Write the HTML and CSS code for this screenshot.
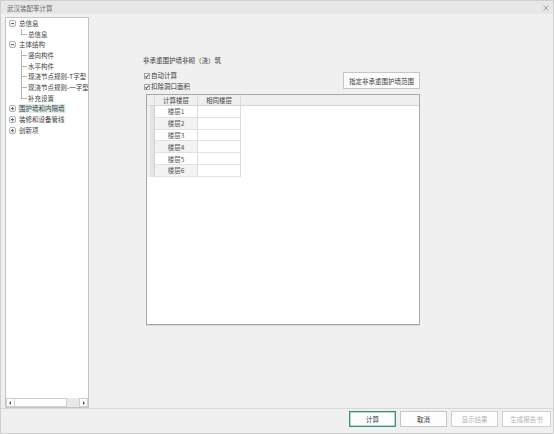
FILE: index.html
```html
<!DOCTYPE html>
<html lang="zh-CN">
<head>
<meta charset="utf-8">
<title>武汉装配率计算</title>
<link rel="stylesheet" href="styles.css">
</head>
<body>
<div class="window">
  <div class="titlebar">
    <span class="title">武汉装配率计算</span>
    <span class="close">
      <svg width="6" height="6" viewBox="0 0 6 6"><path d="M0.5 0.5L5.5 5.5M5.5 0.5L0.5 5.5" stroke="#9a9a9a" stroke-width="0.9"/></svg>
    </span>
  </div>
  <div class="body">
    <div class="tree-panel">
      <div class="tree">
        <div class="node root"><span class="exp minus"></span><span class="label">总信息</span></div>
        <div class="node child last"><span class="conn"></span><span class="label">总信息</span></div>
        <div class="node root"><span class="exp minus"></span><span class="label">主体结构</span></div>
        <div class="node child"><span class="conn"></span><span class="label">竖向构件</span></div>
        <div class="node child"><span class="conn"></span><span class="label">水平构件</span></div>
        <div class="node child"><span class="conn"></span><span class="label">现浇节点规则-T字型</span></div>
        <div class="node child"><span class="conn"></span><span class="label">现浇节点规则-一字型</span></div>
        <div class="node child last"><span class="conn"></span><span class="label">补充设置</span></div>
        <div class="node root"><span class="exp plus"></span><span class="label selected">围护墙和内隔墙</span></div>
        <div class="node root"><span class="exp plus"></span><span class="label">装修和设备管线</span></div>
        <div class="node root"><span class="exp plus"></span><span class="label">创新项</span></div>
      </div>
      <div class="hscroll">
        <span class="sbtn left"></span>
        <span class="thumb"></span>
        <span class="track"></span>
        <span class="sbtn right"></span>
      </div>
    </div>
    <div class="main">
      <div class="content">
        <div class="heading">非承重围护墙非砌（浇）筑</div>
        <div class="options">
          <div class="checks">
            <label class="check"><span class="box"></span>自动计算</label>
            <label class="check"><span class="box"></span>扣除洞口面积</label>
          </div>
          <div class="btn range">指定非承重围护墙范围</div>
        </div>
        <div class="grid">
          <div class="grow ghead">
            <span class="rh"></span>
            <span class="cell">计算楼层</span>
            <span class="cell">相同楼层</span>
          </div>
          <div class="grow"><span class="rh"></span><span class="cell name">楼层1</span><span class="cell"></span></div>
          <div class="grow alt"><span class="rh"></span><span class="cell name">楼层2</span><span class="cell"></span></div>
          <div class="grow"><span class="rh"></span><span class="cell name">楼层3</span><span class="cell"></span></div>
          <div class="grow alt"><span class="rh"></span><span class="cell name">楼层4</span><span class="cell"></span></div>
          <div class="grow"><span class="rh"></span><span class="cell name">楼层5</span><span class="cell"></span></div>
          <div class="grow alt"><span class="rh"></span><span class="cell name">楼层6</span><span class="cell"></span></div>
        </div>
      </div>
    </div>
  </div>
  <div class="footer">
    <div class="btn primary">计算</div>
    <div class="btn">取消</div>
    <div class="btn disabled">显示结果</div>
    <div class="btn disabled wide">生成报告书</div>
  </div>
</div>
</body>
</html>
```
FILE: styles.css
```css
* { box-sizing: border-box; }
html, body { margin: 0; padding: 0; }
body {
  width: 554px;
  height: 434px;
  background: #f0f0f0;
  font-family: "Noto Sans CJK SC", "Microsoft YaHei", sans-serif;
  font-size: 6.5px;
  color: #3c3c3c;
  overflow: hidden;
}
.window {
  width: 554px;
  height: 434px;
  border: 1px solid #cfcfcf;
  background: #f0f0f0;
  display: flex;
  flex-direction: column;
}
.titlebar {
  height: 13px;
  background: #e7e7e7;
  display: flex;
  align-items: center;
  justify-content: space-between;
  padding: 0 4px 0 6px;
  flex: none;
}
.title { color: #6a6a6a; }
.close { display: flex; align-items: center; }
.body {
  height: 394px;
  display: flex;
  flex: none;
}
.tree-panel {
  margin: 3px 0 0 4px;
  width: 84px;
  height: 391px;
  background: #fff;
  border: 1px solid #c4c4c4;
  display: flex;
  flex-direction: column;
  overflow: hidden;
}
.tree { flex: 1; overflow: hidden; }
.node {
  display: flex;
  align-items: center;
  height: 10.7px;
  white-space: nowrap;
}
.node.root { padding-left: 3px; }
.node.child { padding-left: 15px; align-items: stretch; }
.node.child .label { align-self: center; margin-left: 0; }
.exp {
  width: 7px;
  height: 7px;
  border: 1px solid #aab2ba;
  border-radius: 2px;
  background: linear-gradient(#fdfdfd, #e4e8ec);
  margin-right: 2px;
  position: relative;
  flex: none;
}
.exp::before {
  content: "";
  position: absolute;
  left: 1px; top: 2px;
  width: 3px; height: 1px;
  background: #5a6a78;
}
.exp.plus::after {
  content: "";
  position: absolute;
  left: 2px; top: 1px;
  width: 1px; height: 3px;
  background: #5a6a78;
}
.conn {
  width: 6px;
  flex: none;
  background:
    linear-gradient(#b4b4b4, #b4b4b4) left top / 1px 100% no-repeat,
    linear-gradient(#b4b4b4, #b4b4b4) left 50% / 100% 1px no-repeat;
}
.node.child.last .conn {
  background:
    linear-gradient(#b4b4b4, #b4b4b4) left top / 1px 50% no-repeat,
    linear-gradient(#b4b4b4, #b4b4b4) left 50% / 100% 1px no-repeat;
}
.label { color: #3c3c3c; line-height: 9px; padding: 0 1px; }
.label.selected { background: #e0f1ee; }
.hscroll {
  height: 9px;
  display: flex;
  flex: none;
  background: #e8e8e8;
}
.sbtn {
  width: 9px;
  height: 9px;
  background: #fff;
  border: 1px solid #cfcfcf;
  position: relative;
  flex: none;
}
.sbtn::after {
  content: "";
  position: absolute;
  top: 2px;
  width: 0; height: 0;
  border-top: 2px solid transparent;
  border-bottom: 2px solid transparent;
}
.sbtn.left::after { left: 2px; border-right: 2px solid #555; }
.sbtn.right::after { left: 3px; border-left: 2px solid #555; }
.thumb {
  width: 52px;
  height: 9px;
  background: #fff;
  border: 1px solid #cfcfcf;
  border-left: none;
  flex: none;
}
.track { flex: 1; }
.main { flex: 1; }
.content {
  margin: 42px 0 0 54px;
  width: 277px;
}
.heading { line-height: 9px; height: 9px; }
.options {
  margin-top: 5px;
  display: flex;
  justify-content: space-between;
  align-items: flex-start;
  height: 24px;
}
.checks { display: flex; flex-direction: column; }
.check {
  display: flex;
  align-items: center;
  height: 11px;
  line-height: 11px;
}
.box {
  width: 6px;
  height: 6px;
  border: 1px solid #a4a4a4;
  background: #fff;
  margin: 0 1px 0 1px;
  position: relative;
}
.box::after {
  content: "";
  position: absolute;
  left: 1.2px; top: 0.2px;
  width: 1.4px; height: 2.8px;
  border-right: 0.7px solid #555;
  border-bottom: 0.7px solid #555;
  transform: rotate(40deg);
}
.btn {
  height: 16px;
  width: 47px;
  background: #fdfdfd;
  border: 1px solid #c6c6c6;
  display: flex;
  align-items: center;
  justify-content: center;
  color: #3c3c3c;
  white-space: nowrap;
}
.btn.range {
  width: 77px;
  height: 17px;
  margin-top: 2px;
}
.grid {
  margin: 0 0 0 3px;
  width: 274px;
  height: 231px;
  background: #fff;
  border: 1px solid #a8a8a8;
  box-shadow: 0 1px 0 #d8d8d8;
}
.grow {
  display: flex;
  height: 11.8px;
}
.grow.ghead {
  height: 11px;
  background: #efefef;
  border-bottom: 1px solid #d6d6d6;
}
.rh {
  width: 8px;
  flex: none;
  background: linear-gradient(to right, #f1f1f1 0 3px, #e3e3e3 3px);
  border-right: 1px solid #d2d2d2;
}
.ghead .rh { background: #efefef; border-right-color: #dcdcdc; }
.cell {
  width: 43px;
  flex: none;
  border-right: 1px solid #dcdcdc;
  border-bottom: 1px solid #e2e2e2;
  display: flex;
  align-items: center;
  justify-content: center;
  color: #555;
}
.ghead .cell { border-bottom: none; color: #444; }
.grow.alt .cell.name { background: #f3f3f3; }
.footer {
  flex: 1;
  border-top: 1px solid #d8d8d8;
  display: flex;
  justify-content: flex-end;
  align-items: flex-start;
  gap: 4px;
  padding: 2px 2px 0 0;
}
.btn.primary { border: 1px solid #3f8f80; box-shadow: inset 0 0 0 0.5px #6fb3a6; }
.btn.disabled { color: #b4b4b4; border-color: #d0d0d0; }
.btn.wide { width: 49px; }
```
